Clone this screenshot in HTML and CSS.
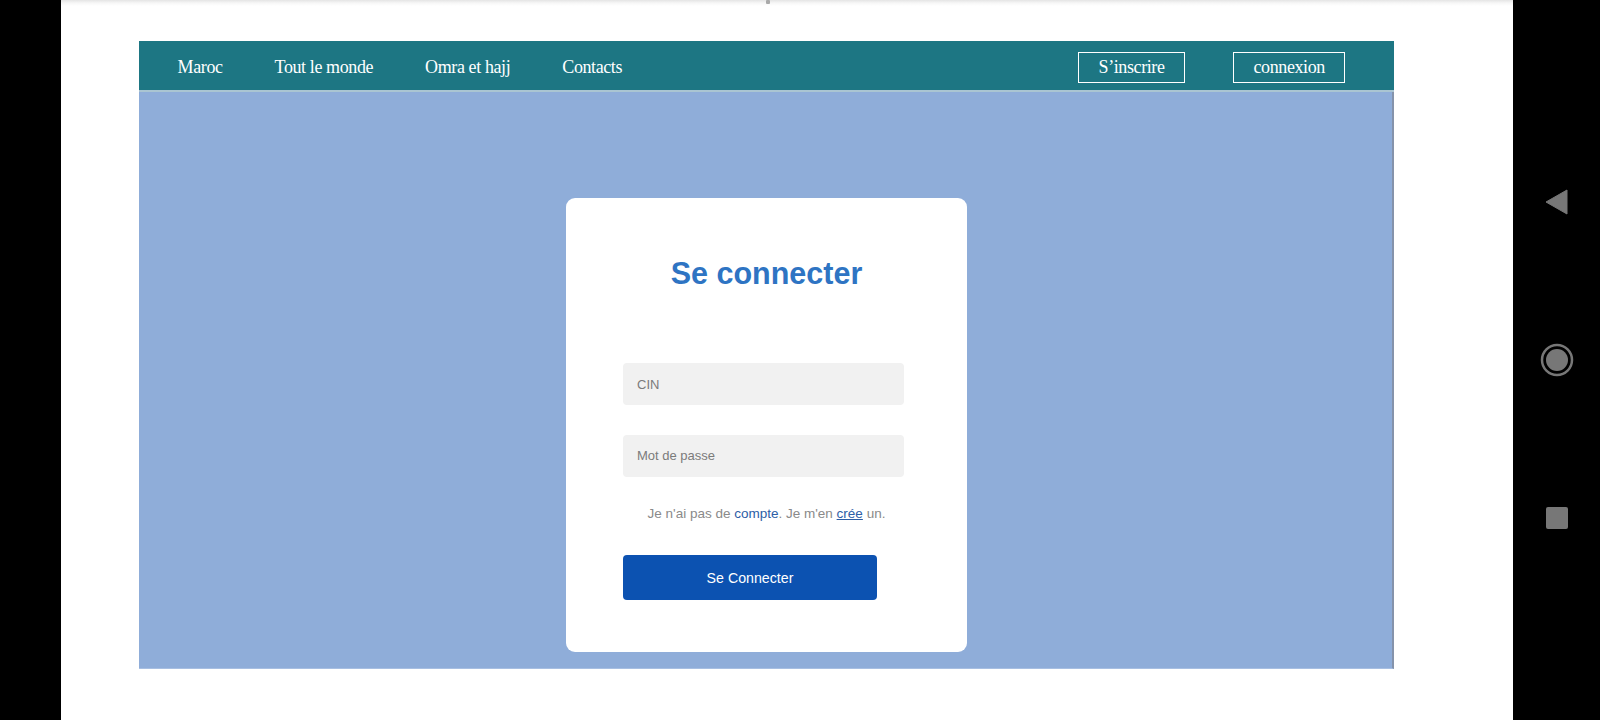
FILE: index.html
```html
<!DOCTYPE html>
<html lang="fr">
<head>
<meta charset="utf-8">
<title>Se connecter</title>
<link rel="stylesheet" href="styles.css">
</head>
<body>
<div class="screen">
  <div class="bezel-left"></div>
  <div class="viewport">
    <span class="tick"></span>
    <div class="page">
      <nav class="topnav">
        <ul class="menu">
          <li><a href="#">Maroc</a></li>
          <li><a href="#">Tout le monde</a></li>
          <li><a href="#">Omra et hajj</a></li>
          <li><a href="#">Contacts</a></li>
        </ul>
        <div class="auth">
          <a class="auth-btn" href="#">S’inscrire</a>
          <a class="auth-btn" href="#">connexion</a>
        </div>
      </nav>
      <main class="hero">
        <form class="card">
          <h1 class="card-title">Se connecter</h1>
          <div class="fields">
            <input class="field" type="text" placeholder="CIN">
            <input class="field" type="password" placeholder="Mot de passe">
          </div>
          <p class="signup">Je n'ai pas de <a class="link" href="#">compte</a>. Je m'en <a class="link link-u" href="#">crée</a> un.</p>
          <div class="actions">
            <button class="submit" type="button">Se Connecter</button>
          </div>
        </form>
      </main>
    </div>
  </div>
  <div class="sysbar">
    <svg class="sys-icon" width="34" height="34" viewBox="0 0 34 34"><polygon points="6,17 27,5 27,29" fill="#777" stroke="#777" stroke-width="1" stroke-linejoin="round"/></svg>
    <svg class="sys-icon" width="34" height="34" viewBox="0 0 34 34"><circle cx="17" cy="17" r="15" fill="none" stroke="#777" stroke-width="2.5"/><circle cx="17" cy="17" r="11" fill="#777"/></svg>
    <svg class="sys-icon" width="34" height="34" viewBox="0 0 34 34"><rect x="6" y="6" width="22" height="22" rx="2" fill="#777"/></svg>
  </div>
</div>
</body>
</html>
```
FILE: styles.css
```css
* { box-sizing: border-box; }
html, body { margin: 0; padding: 0; }
body { width: 1600px; height: 720px; overflow: hidden; background: #000; }

.screen { display: flex; width: 1600px; height: 720px; }
.bezel-left { width: 61px; background: #000; flex: none; }

.viewport {
  position: relative;
  flex: 1;
  background: linear-gradient(#e4e4e4 0, #f7f7f7 3px, #ffffff 6px);
  padding: 41px 0 0 78px;
}
.tick {
  position: absolute;
  left: 705px;
  top: 0;
  width: 4px;
  height: 4px;
  background: #a9a9a9;
  border-radius: 1px;
}

.page { width: 1255px; }

.topnav {
  height: 50.5px;
  background: #1d7683;
  border-bottom: 2px solid #aac5d2;
  padding: 3.5px 48.6px 0 38.6px;
  display: flex;
  align-items: center;
  justify-content: space-between;
  font-family: "Liberation Serif", "Times New Roman", serif;
  font-size: 18px;
  letter-spacing: -0.4px;
  line-height: 20px;
}
.menu { list-style: none; margin: 0; padding: 0; display: flex; gap: 52px; }
.menu a { color: #fff; text-decoration: none; }
.auth { display: flex; gap: 48px; }
.auth-btn {
  color: #fff;
  text-decoration: none;
  border: 1px solid #fff;
  padding: 0 19.5px;
  line-height: 29px;
}

.hero {
  height: 577px;
  background: #8fadd9;
  border-right: 2px solid #8593ab;
  border-bottom: 1px solid #a8bfe2;
  padding: 106.5px 0 0 2px;
}

.card {
  width: 401px;
  height: 454px;
  margin: 0 auto;
  background: #fff;
  border-radius: 9px;
  padding-top: 57px;
  font-family: "Liberation Sans", Arial, sans-serif;
}
.card-title {
  margin: 0;
  text-align: center;
  color: #2e74c3;
  font-size: 30.5px;
  line-height: 36px;
  font-weight: bold;
}
.fields {
  display: flex;
  flex-direction: column;
  gap: 29.3px;
  padding-left: 57px;
  margin-top: 72px;
}
.field {
  width: 281px;
  height: 42.4px;
  border: none;
  border-radius: 4px;
  background: #f1f1f1;
  padding: 0 14px;
  font-family: "Liberation Sans", Arial, sans-serif;
  font-size: 13px;
  color: #333;
  outline: none;
}
.field::placeholder { color: #7b7b7b; }

.signup {
  margin: 28.3px 0 0;
  text-align: center;
  font-size: 13.5px;
  line-height: 18px;
  color: #8a8a8a;
}
.link { color: #2d5ea6; text-decoration: none; }
.link-u { text-decoration: underline; }

.actions { padding-left: 57px; margin-top: 32px; }
.submit {
  width: 254px;
  height: 44.3px;
  border: none;
  border-radius: 4px;
  background: #0c52b1;
  color: #fff;
  font-family: "Liberation Sans", Arial, sans-serif;
  font-size: 14.2px;
}

.sysbar {
  width: 87px;
  flex: none;
  background: #000;
  display: flex;
  flex-direction: column;
  align-items: center;
  gap: 124px;
  padding-top: 185px;
}
.sys-icon { display: block; }
```
